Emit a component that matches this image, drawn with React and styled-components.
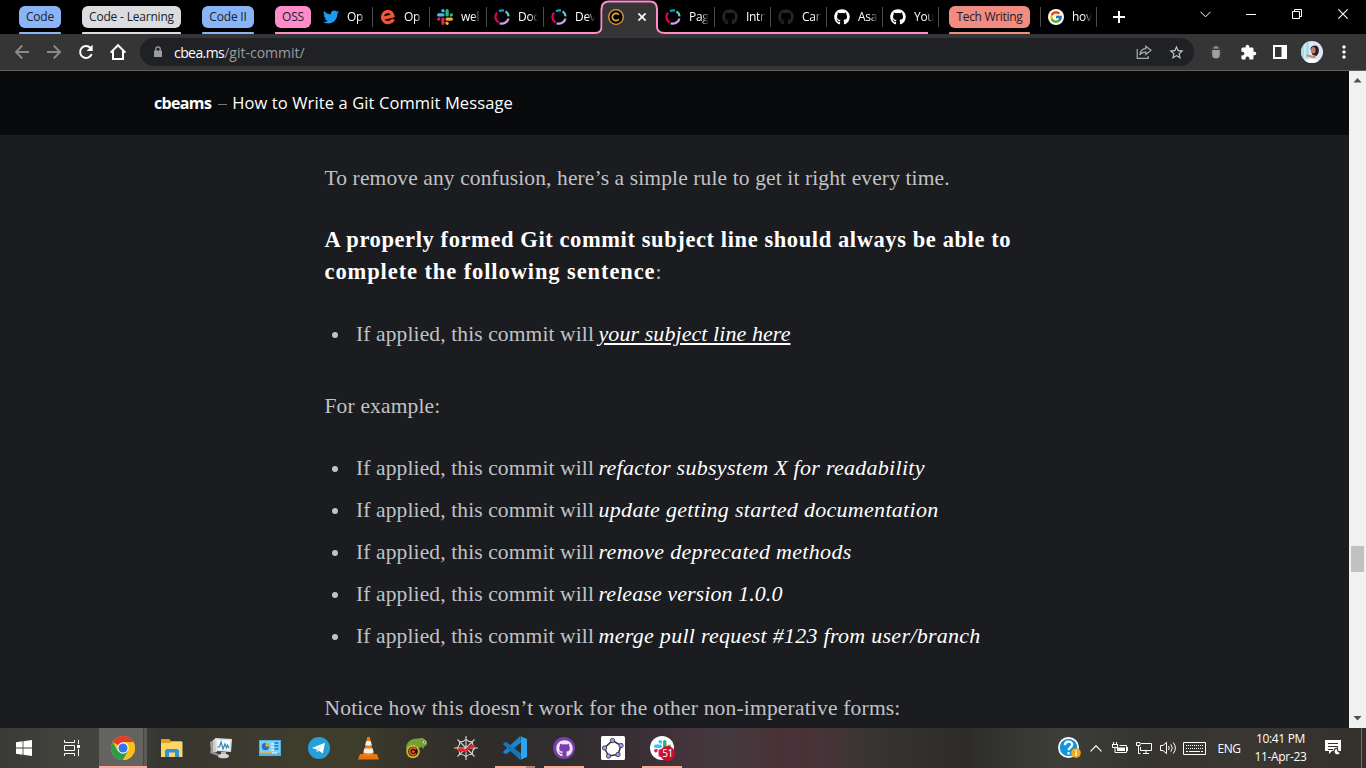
import React from "react";
import styled, { createGlobalStyle, css } from "styled-components";
import { FaTwitter, FaGithub } from "react-icons/fa";
import { FcGoogle } from "react-icons/fc";
import { MdExtension, MdStarBorder, MdMoreVert } from "react-icons/md";

const UI = `"Open Sans", "Noto Sans", sans-serif`;
const SERIF = `"Liberation Serif", serif`;
const PINK = "#ff8bcb";

const GlobalStyle = createGlobalStyle`
  * { box-sizing: border-box; }
  body { margin: 0; background: #000; overflow: hidden; font-family: ${UI}; }
  svg { display: block; flex: none; }
`;

const Screen = styled.div`
  width: 1366px;
  height: 768px;
  display: grid;
  grid-template-rows: 34px 37px 657px 40px;
  overflow: hidden;
`;

/* ---------- Tab strip ---------- */
const TabStrip = styled.header`
  display: flex;
  align-items: stretch;
  padding-left: 19px;
  background: #000;
`;

const GroupChip = styled.div`
  position: relative;
  flex: none;
  width: ${(p) => p.$width}px;
  height: 22px;
  margin: 6px ${(p) => p.$gap}px 0 0;
  border-radius: 6px;
  background: ${(p) => p.$color};
  color: #202124;
  font-size: 12px;
  line-height: 22px;
  letter-spacing: ${(p) => p.$spacing || -0.2}px;
  text-align: center;
  white-space: nowrap;
  ${(p) =>
    !p.$open &&
    css`
      &::after {
        content: "";
        position: absolute;
        left: 0;
        right: 0;
        bottom: -6px;
        height: 2px;
        border-radius: 1px 1px 0 0;
        background: ${p.$color};
      }
    `}
`;

const OpenGroup = styled.div`
  position: relative;
  display: flex;
  margin-right: 10px;
  &::after {
    content: "";
    position: absolute;
    left: 0;
    right: 11px;
    bottom: 0;
    height: 2px;
    background: ${PINK};
  }
`;

const Tab = styled.div`
  width: ${(p) => p.$width || 57}px;
  flex: none;
  display: flex;
  align-items: center;
  gap: 8px;
  padding-left: 7px;
  position: relative;
  &::after {
    content: "";
    position: absolute;
    right: 0;
    top: 7px;
    width: 1px;
    height: 20px;
    background: ${(p) => (p.$divider === false ? "transparent" : "#4b4c4f")};
  }
`;

const TabTitle = styled.span`
  width: 20px;
  white-space: nowrap;
  font-size: 12px;
  line-height: 18px;
  letter-spacing: -0.3px;
  color: #fff;
  mask-image: linear-gradient(to right, #000 60%, transparent 100%);
`;

const ActiveTab = styled.div`
  position: relative;
  z-index: 1;
  width: 57px;
  flex: none;
  display: flex;
  align-items: center;
  gap: 14px;
  padding-left: 7px;
  > svg { position: relative; }
  > svg:first-child { position: absolute; left: -6px; top: 0; }
`;

const RoundFavicon = styled.span`
  width: 16px;
  height: 16px;
  border-radius: 50%;
  background: #fff;
  display: grid;
  place-items: center;
`;

const Divider = styled.i`
  flex: none;
  width: 1px;
  height: 20px;
  margin-top: 7px;
  background: #4b4c4f;
`;

const NewTab = styled.div`
  display: flex;
  align-items: center;
  margin-left: 16px;
`;

const WindowControls = styled.div`
  margin-left: auto;
  display: grid;
  grid-template-columns: repeat(4, 46px);
  height: 28px;
  place-items: center;
`;

/* ---------- Toolbar ---------- */
const Toolbar = styled.nav`
  display: flex;
  align-items: center;
  background: #353535;
  border-bottom: 1px solid #5e5e5e;
  padding: 0 6px 0 6px;
`;

const ToolButton = styled.span`
  width: 32px;
  flex: none;
  display: grid;
  place-items: center;
  color: ${(p) => p.$color || "#fff"};
`;

const AddressBar = styled.div`
  flex: none;
  width: 1054px;
  height: 28px;
  margin: 0 6px;
  border-radius: 14px;
  background: #202124;
  display: flex;
  align-items: center;
  padding: 0 2px 0 14px;
  font-size: 14px;
`;

const Host = styled.span`
  margin-left: 12px;
  color: #fff;
  letter-spacing: -0.58px;
`;

const Path = styled.span`
  flex: 1;
  color: #9a9da1;
`;

/* ---------- Page ---------- */
const Viewport = styled.div`
  display: grid;
  grid-template-columns: 1fr 17px;
  overflow: hidden;
`;

const Page = styled.main`
  background: #1b1c20;
  overflow: hidden;
`;

const SiteHeader = styled.div`
  height: 64px;
  padding: 0 0 1px 154px;
  background: #090a0c;
  display: flex;
  align-items: center;
  font-size: 16px;
  color: #fff;
  white-space: pre;
`;

const SiteName = styled.b`
  letter-spacing: -0.65px;
`;

const Dash = styled.span`
  width: 9px;
  height: 1px;
  margin: 3px 5px 0 7px;
  background: #77787a;
`;

const ArticleTitle = styled.span`
  font-size: 16.5px;
  letter-spacing: 0.11px;
`;

const Article = styled.article`
  margin-left: 324.5px;
  padding-top: 27px;
  width: 720px;
  font-family: ${SERIF};
  font-size: 21.5px;
  line-height: 32px;
  color: #c1c2c4;
`;

const Paragraph = styled.p`
  margin: 0 0 30px;
  letter-spacing: ${(p) => p.$spacing || 0}px;
  white-space: nowrap;
`;

const Strong = styled.strong`
  font-size: 22.5px;
  line-height: 31px;
  color: #fff;
  letter-spacing: ${(p) => p.$spacing}px;
`;

const List = styled.ul`
  display: flow-root;
  list-style: none;
  margin: 0 0 30px;
  padding: 0;
`;

const Item = styled.li`
  display: flex;
  align-items: center;
  height: 32px;
  margin-bottom: 10px;
  letter-spacing: 0.12px;
  white-space: pre;
  &::before {
    content: "";
    width: 6px;
    height: 6px;
    margin: 2px 18px 0 7.5px;
    border-radius: 50%;
    background: #c1c2c4;
  }
`;

const Subject = styled.em`
  margin-left: -1px;
  font-size: 22px;
  color: #fff;
  letter-spacing: ${(p) => p.$spacing}px;
  text-decoration: ${(p) => (p.$underlined ? "underline" : "none")};
  text-decoration-thickness: 2px;
  text-underline-offset: 2px;
`;

const Scrollbar = styled.div`
  background: #f1f1f1;
  display: flex;
  flex-direction: column;
  align-items: center;
  justify-content: space-between;
  padding: 7px 0;
`;

const Thumb = styled.div`
  width: 13px;
  height: 26px;
  margin-top: 463px;
  margin-bottom: auto;
  background: #c1c1c1;
`;

/* ---------- Taskbar ---------- */
const Taskbar = styled.footer`
  display: flex;
  align-items: stretch;
  background: linear-gradient(
    to right,
    #3a3a36 0, #43433e 70px, #42423e 130px, #373631 160px, #3d3b2e 260px, #3f3e2c 350px,
    #35332a 410px, #2e2d2b 480px, #302e2e 560px, #3a2f34 640px, #43353b 690px,
    #443a3d 730px, #4a3138 780px, #463338 825px, #3b3534 860px, #33322f 900px,
    #2d2c29 965px, #363631 1010px, #3e3e39 1060px, #35342e 1150px, #3a3732 1240px, #34312d 1366px
  );
`;

const AppButton = styled.div`
  position: relative;
  flex: none;
  width: ${(p) => (p.$system ? 48 : 49)}px;
  padding-right: ${(p) => (p.$system ? 0 : 1)}px;
  display: grid;
  place-items: center;
  ${(p) =>
    p.$running &&
    css`
      &::after {
        content: "";
        position: absolute;
        left: 4px;
        right: 5px;
        bottom: 0;
        height: 2px;
        background: ${p.$stacked
          ? "linear-gradient(to right, #f9ab98 31px, #b98277 31px)"
          : "#f9ab98"};
      }
    `}
  ${(p) =>
    p.$focused &&
    css`
      background: linear-gradient(to right, #656360 44px, #484743 44px, #484743 45px, #5c5a56 45px, #5c5a56 48px, transparent 48px);
      &::after { left: 0; right: 1px; }
    `}
`;

const PinnedApps = styled.div`
  display: flex;
  margin-left: 3px;
`;

const BadgedIcon = styled.span`
  position: relative;
  width: 24px;
  height: 24px;
  border-radius: 50%;
  background: #fff;
  display: grid;
  place-items: center;
`;

const Badge = styled.span`
  position: absolute;
  left: 10px;
  top: 10px;
  width: 15px;
  height: 15px;
  border-radius: 50%;
  background: #c8102e;
  color: #fff;
  font-size: 10px;
  line-height: 14px;
  text-align: center;
  letter-spacing: -0.4px;
`;

const Tray = styled.div`
  margin-left: auto;
  display: flex;
  align-items: center;
  color: #fff;
  font-size: 12px;
`;

const TrayIcon = styled.span`
  width: ${(p) => p.$width || 24}px;
  display: grid;
  place-items: center;
`;

const Language = styled.span`
  width: 40px;
  text-align: center;
  letter-spacing: -0.4px;
`;

const Clock = styled.div`
  width: 63px;
  text-align: center;
  line-height: 18px;
  padding-bottom: 1px;
  letter-spacing: -0.35px;
`;

const Notifications = styled.span`
  width: 42px;
  display: grid;
  place-items: center;
`;

const ShowDesktop = styled.span`
  align-self: stretch;
  width: 5px;
  margin-left: 7px;
  border-left: 1px solid #6f6e6a;
`;

/* ---------- Icons ---------- */
const SLACK_ARM =
  "M5.042 15.165a2.528 2.528 0 0 1-2.52 2.523A2.528 2.528 0 0 1 0 15.165a2.527 2.527 0 0 1 2.522-2.52h2.52v2.52zM6.313 15.165a2.527 2.527 0 0 1 2.521-2.52 2.527 2.527 0 0 1 2.521 2.52v6.313A2.528 2.528 0 0 1 8.834 24a2.528 2.528 0 0 1-2.521-2.522v-6.313z";

const SlackIcon = ({ size }) => (
  <svg width={size} height={size} viewBox="0 0 24 24">
    {["#e01e5a", "#36c5f0", "#2eb67d", "#ecb22e"].map((c, i) => (
      <path key={c} d={SLACK_ARM} fill={c} transform={`rotate(${i * 90} 12 12)`} />
    ))}
  </svg>
);

const EventbriteIcon = () => (
  <svg width="16" height="16" viewBox="0 0 16 16">
    <path d="M2.500 9.300 12.900 6.900C12.300 3.800 9.900 2 7 2.700 3.800 3.400 2 6.200 2.700 9.400c.7 3 3.300 4.600 6.300 4 2-.4 3.400-1.400 4.500-3.100" fill="none" stroke="#f05537" strokeWidth="3.300" />
  </svg>
);

const RingIcon = () => (
  <svg width="16" height="16" viewBox="0 0 16 16" fill="none" strokeWidth="2.200">
    <path d="M4.600 13.600A6.700 6.700 0 0 1 3 3.600" stroke="#e5005b" />
    <path d="M5 2.200A6.600 6.600 0 0 1 10 1.600" stroke="#00a3e0" />
    <path d="M11.600 2.400A6.700 6.700 0 0 1 14.600 7.400" stroke="#5fd3bc" />
    <path d="M14.500 9.400A6.700 6.700 0 0 1 5.600 14.200" stroke="#c9a0ea" />
  </svg>
);

const ActiveShape = () => (
  <svg width="70" height="34" viewBox="0 0 70 34">
    <path d="M0 0H70V34H0z" fill="#000" />
    <path d="M0 33C4.500 33 6.500 31 6.500 27V9C6.500 4 9 1.500 14 1.500H55C60 1.500 62 4 62 9V27C62 31 64.500 33 70 33V35H0z" fill="#353535" stroke={PINK} strokeWidth="2" />
    <path d="M4 33.500C6 32.500 7.500 31 7.500 28V10H61V28C61 31 62.500 32.500 65 34H3z" fill="#353535" />
  </svg>
);

const CopyrightFavicon = () => (
  <svg width="16" height="16" viewBox="0 0 16 16" fill="none" stroke="#e8a33d">
    <circle cx="8" cy="8" r="7.300" fill="#000" strokeWidth="1.300" />
    <path d="M10.800 5.800A3.600 3.600 0 1 0 10.800 10.200" strokeWidth="1.700" />
  </svg>
);

const CloseGlyph = ({ size = 8, w = 1.7, color = "#fff" }) => (
  <svg width={size} height={size} viewBox={`0 0 ${size} ${size}`} stroke={color} strokeWidth={w}>
    <path d={`M.4 .4 ${size - 0.4} ${size - 0.4}M${size - 0.4} .4 .4 ${size - 0.4}`} />
  </svg>
);

const ArrowIcon = ({ flip }) => (
  <svg width="16" height="16" viewBox="0 0 16 16" fill="none" stroke="#8a8a8a" strokeWidth="1.800">
    <path d="M15 8H2M8.300 1.500 1.900 8l6.400 6.500" transform={flip ? "rotate(180 8 8)" : undefined} />
  </svg>
);

const ReloadIcon = () => (
  <svg width="16" height="16" viewBox="0 0 16 16" fill="none" stroke="#fff" strokeWidth="2">
    <path d="M13.700 10.200A6 6 0 1 1 12.400 3.800" />
    <path d="M14.700 .8V7H8.500z" fill="#fff" stroke="none" />
  </svg>
);

const HomeIcon = () => (
  <svg width="18" height="18" viewBox="0 0 18 18" fill="none" stroke="#fff" strokeWidth="2">
    <path d="M1.600 9.600 9 2.200l7.400 7.400M4 8v8h10V8" />
  </svg>
);

const LockIcon = () => (
  <svg width="8" height="12" viewBox="0 0 8 12">
    <path d="M0 4.500h8V11H0z" fill="#9a9da1" />
    <path d="M1.800 5V3a2.200 2.200 0 0 1 4.400 0v2" fill="none" stroke="#9a9da1" strokeWidth="1.300" />
  </svg>
);

const ShareIcon = () => (
  <svg width="16" height="16" viewBox="0 0 16 16" fill="none" stroke="#a9abae" strokeWidth="1.200">
    <path d="M1.200 5v9.400h11V12" />
    <path d="M9.800 2.200 15 6.300l-5.200 4.200V8.200c-3 0-4.800.8-6 2.800.3-3.500 2.300-6 6-6.300z" />
  </svg>
);

const BugIcon = () => (
  <svg width="14" height="16" viewBox="0 0 14 16">
    <path d="M1 4 4 6M13 4l-3 2M0 9h14M1 14l3-2M13 14l-3-2" stroke="#454545" />
    <path d="M4.200 4.800a2.800 2.800 0 0 1 5.600 0z" fill="#8b8b8b" />
    <path d="M3.200 6h7.600v4.500a3.800 4 0 0 1-7.600 0z" fill="#a0a0a0" />
  </svg>
);

const SidePanelIcon = () => (
  <svg width="14" height="14" viewBox="0 0 14 14">
    <path d="M1 1h12v12H1z" fill="none" stroke="#fff" strokeWidth="2" />
    <path d="M8.500 1H13v12H8.500z" fill="#fff" />
  </svg>
);

const Avatar = () => (
  <svg width="22" height="22" viewBox="0 0 22 22">
    <defs><clipPath id="avatar"><circle cx="11" cy="11" r="11" /></clipPath></defs>
    <g clipPath="url(#avatar)">
      <path d="M0 0h22v22H0z" fill="#dfe7f5" />
      <path d="M0 0h8v22H0z" fill="#a9dbe9" />
      <path d="M3 0h2v22H3z" fill="#c8ebf3" />
      <path d="M9.500 8c0-4 7-5 8-1 1 3 0 6-2 8l-4-1z" fill="#2e2028" />
      <ellipse cx="12.300" cy="9.200" rx="2.200" ry="3.200" fill="#b98068" />
      <path d="M5 13l6 1.500 4 .5-1 3-8-2.500z" fill="#c99079" />
      <path d="M3 22c0-4 4-5 7-4.500 5-.5 8 1 8 4.500z" fill="#fff" />
    </g>
  </svg>
);

const Triangle = ({ down }) => (
  <svg width="9" height="5" viewBox="0 0 9 5">
    <path d={down ? "M.5 0h8l-4 4.500z" : "M.5 4.500h8l-4-4.500z"} fill="#505050" />
  </svg>
);

const WindowsIcon = () => (
  <svg width="16" height="16" viewBox="0 0 16 16" fill="#fff">
    <path d="M0 2.200 6.600 1.300V7.600H0zM7.400 1.200 16 0V7.600H7.400zM0 8.400H6.600V14.700L0 13.800zM7.400 8.400H16V16L7.400 14.800z" />
  </svg>
);

const TaskViewIcon = () => (
  <svg width="17" height="16" viewBox="0 0 17 16" fill="none" stroke="#fff">
    <path d="M.5 0v2.500h10V0M.5 5.500h10v5H.5zM.5 16v-2.500h10V16M14.500 0v4M14.500 9v7" />
    <path d="M13 5h3v3h-3z" fill="#fff" stroke="none" />
  </svg>
);

const ChromeIcon = () => (
  <svg width="24" height="24" viewBox="0 0 24 24">
    <circle cx="12" cy="12" r="12" fill="#fbc116" />
    <path d="M12 12 1.600 6A12 12 0 0 1 22.400 6z" fill="#e33b2e" />
    <path d="M1.600 6A12 12 0 0 0 12 24l5.200-9L12 12 6.800 15z" fill="#2c9c4b" />
    <path d="M12 6h10.400A12 12 0 0 1 12 24l5.200-9z" fill="#fbc116" />
    <circle cx="12" cy="12" r="5.700" fill="#fff" />
    <circle cx="12" cy="12" r="4.600" fill="#3177e8" />
  </svg>
);

const FolderIcon = () => (
  <svg width="22" height="19" viewBox="0 0 22 19">
    <path d="M0 0h8l2 2h11v4H0z" fill="#e0a31f" />
    <path d="M0 4h9l2-1h10.500v15H0z" fill="#fcd667" />
    <path d="M4 18v-6.500l1.500-1.500h11l1.500 1.500V18h-4v-4.500H8V18z" fill="#3192d8" />
  </svg>
);

const MonitorIcon = () => (
  <svg width="24" height="22" viewBox="0 0 24 22">
    <path d="M1 5l5-3v12l-4 2z" fill="#9a9c9c" />
    <path d="M4 3 8 1v14l-4 1z" fill="#c9cccc" />
    <path d="M6 1 23 2 22 15 7 14z" fill="#dfe3e3" />
    <path d="M8 3l13 .6-.8 10L9 13z" fill="#f7fbfd" />
    <path d="M8.500 10h2l1.500-5 2 7 2-5 1.500 4 1-3 1.500 3" fill="none" stroke="#3486b8" strokeWidth="1.200" />
    <path d="M12 15h5v3h-5z" fill="#b4b6b6" />
    <ellipse cx="14.500" cy="19" rx="5.500" ry="2.300" fill="#d5d7d7" />
    <path d="M1 14l9 3-1 2-8-3z" fill="#8f9191" />
  </svg>
);

const PanelIcon = () => (
  <svg width="22" height="16" viewBox="0 0 22 16">
    <path d="M0 0h22v16H0z" fill="#4fb3e4" />
    <path d="M1 1h20v12H1z" fill="#7fd0f5" />
    <circle cx="6.500" cy="6.500" r="3.700" fill="#1d75bd" />
    <path d="M6.500 6.500V2.800a3.700 3.700 0 0 1 3.700 3.700z" fill="#f4a62a" />
    <path d="M12 4h3M12 7h3M12 10h3" stroke="#fff" />
    <path d="M15.500 3h4M15.500 6h4M15.500 9h4" stroke="#1d75bd" strokeWidth="1.500" />
    <path d="M3 13h9" stroke="#f4a62a" strokeWidth="1.500" /><path d="M13 13h5" stroke="#fff" />
  </svg>
);

const TelegramIcon = () => (
  <svg width="22" height="22" viewBox="0 0 22 22">
    <circle cx="11" cy="11" r="11" fill="#279fda" />
    <path d="M4 11 17 5.800 14.800 16.500 10.800 13.600 9 15.300 8.600 12.500z" fill="#fff" />
    <path d="M8.600 12.500 14.500 8 10.300 12.700 9 15.300z" fill="#b9d9ec" />
  </svg>
);

const ConeIcon = () => (
  <svg width="21" height="23" viewBox="0 0 21 23">
    <path d="M2 17h17l2 5.500H0z" fill="#e8720c" />
    <path d="M9.300 0h2.400L16 18.500q-5.500 2.500-11 0z" fill="#f07f12" />
    <path d="M8.300 4h4.400l1.100 4q-3.300 1.300-6.600 0zM6.300 11.500h8.400l1 4q-5.200 1.900-10.400 0z" fill="#eee" />
  </svg>
);

const ChameleonIcon = () => (
  <svg width="24" height="22" viewBox="0 0 24 22">
    <path d="M1 12C1 5 6 1.500 12 1.500c3 0 4-.8 6-.5l4 3.500c.5 2.500-.5 4-2.500 5l-3 .5-1.500 1-2-1.500C9 7 5 8 3 13z" fill="#789f37" />
    <circle cx="8" cy="14.500" r="6.800" fill="#c9b42a" />
    <circle cx="8" cy="14.500" r="4.800" fill="#16110a" />
    <path d="M11 16.500a3.500 3.500 0 1 1 .2-4" fill="none" stroke="#d9582d" strokeWidth="1.800" />
    <circle cx="8.300" cy="14.600" r="1.500" fill="#d9582d" />
    <path d="M13 9.500v3M18 9.500v2" stroke="#a5bb62" strokeWidth="1.200" />
    <circle cx="19.500" cy="5" r="1.500" fill="#e9edd9" /><circle cx="19.700" cy="5" r=".7" fill="#222" />
  </svg>
);

const WebIcon = () => (
  <svg width="24" height="24" viewBox="0 0 24 24" fill="none" stroke="#d3d3d3" strokeWidth="1.100">
    <path d="M12 0v24M3.500 3.500l17 17M20.500 3.500l-17 17M0 12h24" />
    <path d="M12 3.300Q9.500 6 5.800 5.800 6 9.500 3.300 12 6 14.500 5.800 18.200 9.500 18 12 20.700 14.500 18 18.200 18.200 18 14.500 20.700 12 18 9.500 18.200 5.800 14.500 6 12 3.300z" />
    <path d="M4.500 14 8 13.800l3.500 1.200 5-5 3.500.3" stroke="#ee2020" strokeWidth="2.800" strokeLinecap="round" />
  </svg>
);

const VSCodeIcon = () => (
  <svg width="24" height="24" viewBox="0 0 24 24">
    <path d="M17.200 0 18 6.500 3 18.200.6 16.800q-.9-.8 0-1.500z" fill="#1b86d0" />
    <path d="M.6 7.200 3 5.800 18 17.500 17.200 24 .6 8.700q-.9-.7 0-1.500z" fill="#1277bd" />
    <path d="M17 0l7 3v18l-7 3q1-.5 1-2V2q0-1.500-1-2z" fill="#2ba5f0" />
  </svg>
);

const GitHubDisc = styled.span`
  width: 22px;
  height: 22px;
  border-radius: 50%;
  background: #7a3fae;
  display: grid;
  place-items: center;
  color: #efe4f7;
`;

const PentagonIcon = () => (
  <svg width="24" height="24" viewBox="0 0 24 24">
    <rect width="24" height="24" rx="1.500" fill="#fff" />
    <path d="M11.500 4.500 20 9.500 17 18.500 7.500 20 3.500 12z" fill="none" stroke="#333" strokeWidth="1.500" />
    {[[11.5, 4.5], [20, 9.5], [17, 18.5], [7.5, 20], [3.5, 12]].map(([x, y]) => (
      <circle key={x} cx={x} cy={y} r="2.200" fill="#9a9af5" stroke="#333" strokeWidth=".8" />
    ))}
  </svg>
);

const HelpIcon = () => (
  <svg width="23" height="22" viewBox="0 0 23 22" fill="none">
    <circle cx="10.500" cy="10.500" r="10.500" fill="#fff" />
    <circle cx="10.500" cy="10.500" r="8.800" fill="#1296db" />
    <path d="M6.900 8.200C6.900 3.400 14.200 3.600 14.200 7.600c0 2.800-3.600 2.700-3.600 5.600M10.600 15v2.400" stroke="#fff" strokeWidth="2.300" />
    <circle cx="18" cy="16" r="4.800" fill="#f5a81c" />
    <path d="M18 13v1.400M18 15.300v3.600" stroke="#fff" strokeWidth="1.400" />
  </svg>
);

const BatteryIcon = () => (
  <svg width="16" height="12" viewBox="0 0 16 12" fill="none" stroke="#fff">
    <path d="M1.500 0v2M4.500 0v2M0 2.500h6M.5 3v2.500h5V3M3 6v4.500h11.500v-7H7.500" />
    <path d="M5 5.500h8v3.500H5z" fill="#fff" stroke="none" /><path d="M15.500 5v4" />
  </svg>
);

const NetworkIcon = () => (
  <svg width="16" height="14" viewBox="0 0 16 14" fill="none" stroke="#fff">
    <path d="M5 2.500h10.500v7H4.500V6M7 12.500h6M10 10v2.500M.5 1.500h3.500v3H.5zM2.500 5v7.500h2" />
  </svg>
);

const VolumeIcon = () => (
  <svg width="17" height="14" viewBox="0 0 17 14" fill="none" stroke="#fff">
    <path d="M.5 4.500H3L6.500 1.300V12.700L3 9.500H.5zM8.500 5q1.500 2 0 4M10.800 3.300q3 3.700 0 7.400M13.200 1.500q4.400 5.500 0 11" />
  </svg>
);

const KeyboardIcon = () => (
  <svg width="23" height="13" viewBox="0 0 23 13" fill="none" stroke="#fff">
    <path d="M.5 .5h22v12H.5z" />
    <path d="M3 3.500h17M3 6.500h17" strokeDasharray="1 1" /><path d="M3 9.500h2M6 9.500h11M18 9.500h2" />
  </svg>
);

const NoticeIcon = () => (
  <svg width="17" height="16" viewBox="0 0 17 16">
    <path d="M0 0h16v11H7l-3 3v-3H0z" fill="#fff" />
    <path d="M3 3.500h10M3 6.500h10M3 9.500h5" stroke="#35322e" />
    <path d="M12.500 8a3.500 3.500 0 1 0 3.300 4.500A3.500 3.500 0 0 1 12.500 8z" fill="#fff" stroke="#35322e" strokeWidth="1.200" />
  </svg>
);

const examples = [
  ["refactor subsystem X for readability", 0.28],
  ["update getting started documentation", 0.295],
  ["remove deprecated methods", 0.315],
  ["release version 1.0.0", 0.07],
  ["merge pull request #123 from user/branch", 0.28],
];

export default function App() {
  return (
    <Screen>
      <GlobalStyle />
      <TabStrip>
        <GroupChip $width={42} $gap={21} $color="#8ab4f8">Code</GroupChip>
        <GroupChip $width={99} $gap={21} $color="#dadce0">Code - Learning</GroupChip>
        <GroupChip $width={52} $gap={21} $color="#8ab4f8">Code II</GroupChip>
        <OpenGroup>
          <GroupChip $open $width={36} $gap={5} $color={PINK}>OSS</GroupChip>
          <Tab><FaTwitter size={16} color="#1d9bf0" /><TabTitle>Op</TabTitle></Tab>
          <Tab><EventbriteIcon /><TabTitle>Op</TabTitle></Tab>
          <Tab><SlackIcon size={16} /><TabTitle>wel</TabTitle></Tab>
          <Tab><RingIcon /><TabTitle>Doc</TabTitle></Tab>
          <Tab $divider={false}><RingIcon /><TabTitle>Dev</TabTitle></Tab>
          <ActiveTab>
            <ActiveShape />
            <CopyrightFavicon />
            <CloseGlyph />
          </ActiveTab>
          <Tab><RingIcon /><TabTitle>Pag</TabTitle></Tab>
          <Tab $width={56}><FaGithub size={16} color="#222427" /><TabTitle>Intr</TabTitle></Tab>
          <Tab $width={56}><FaGithub size={16} color="#222427" /><TabTitle>Car</TabTitle></Tab>
          <Tab $width={56}><FaGithub size={16} color="#fff" /><TabTitle>Asa</TabTitle></Tab>
          <Tab $width={56}><FaGithub size={16} color="#fff" /><TabTitle>You</TabTitle></Tab>
        </OpenGroup>
        <GroupChip $width={81} $gap={10} $spacing={-0.3} $color="#f28b82">Tech Writing</GroupChip>
        <Divider />
        <Tab $width={56}>
          <RoundFavicon><FcGoogle size={14} /></RoundFavicon>
          <TabTitle>hov</TabTitle>
        </Tab>
        <NewTab>
          <svg width="12" height="12" viewBox="0 0 12 12" stroke="#fff" strokeWidth="2"><path d="M6 0v12M0 6h12" /></svg>
        </NewTab>
        <WindowControls>
          <svg width="11" height="7" viewBox="0 0 11 7" fill="none" stroke="#fff"><path d="M.5 .8 5.500 5.800l5-5" /></svg>
          <svg width="10" height="1" viewBox="0 0 10 1"><path d="M0 0h10v1H0z" fill="#fff" /></svg>
          <svg width="10" height="10" viewBox="0 0 10 10" fill="none" stroke="#fff"><path d="M.5 2.500h7v7h-7zM2.500 2.500v-2h7v7h-2" /></svg>
          <CloseGlyph size={10} w={1.1} />
        </WindowControls>
      </TabStrip>

      <Toolbar>
        <ToolButton><ArrowIcon /></ToolButton>
        <ToolButton><ArrowIcon flip /></ToolButton>
        <ToolButton><ReloadIcon /></ToolButton>
        <ToolButton><HomeIcon /></ToolButton>
        <AddressBar>
          <LockIcon />
          <Host>cbea.ms</Host>
          <Path>/git-commit/</Path>
          <ToolButton><ShareIcon /></ToolButton>
          <ToolButton $color="#c4c6c9"><MdStarBorder size={17} /></ToolButton>
        </AddressBar>
        <ToolButton><BugIcon /></ToolButton>
        <ToolButton><MdExtension size={17} /></ToolButton>
        <ToolButton><SidePanelIcon /></ToolButton>
        <ToolButton><Avatar /></ToolButton>
        <ToolButton><MdMoreVert size={20} /></ToolButton>
      </Toolbar>

      <Viewport>
        <Page>
          <SiteHeader>
            <SiteName>cbeams</SiteName>
            <Dash />
            <ArticleTitle>How to Write a Git Commit Message</ArticleTitle>
          </SiteHeader>
          <Article>
            <Paragraph $spacing={0.12}>To remove any confusion, here’s a simple rule to get it right every time.</Paragraph>
            <Paragraph>
              <Strong $spacing={0.59}>A properly formed Git commit subject line should always be able to</Strong>
              <br />
              <Strong $spacing={0.9}>complete the following sentence</Strong>:
            </Paragraph>
            <List>
              <Item>
                {"If applied, this commit will "}
                <Subject $underlined $spacing={0.07}>your subject line here</Subject>
              </Item>
            </List>
            <Paragraph $spacing={0.16}>For example:</Paragraph>
            <List>
              {examples.map(([text, spacing]) => (
                <Item key={text}>
                  {"If applied, this commit will "}
                  <Subject $spacing={spacing}>{text}</Subject>
                </Item>
              ))}
            </List>
            <Paragraph $spacing={0.19}>Notice how this doesn’t work for the other non-imperative forms:</Paragraph>
          </Article>
        </Page>
        <Scrollbar>
          <Triangle />
          <Thumb />
          <Triangle down />
        </Scrollbar>
      </Viewport>

      <Taskbar>
        <AppButton $system><WindowsIcon /></AppButton>
        <AppButton $system><TaskViewIcon /></AppButton>
        <PinnedApps>
          <AppButton $running $focused><ChromeIcon /></AppButton>
          <AppButton><FolderIcon /></AppButton>
          <AppButton><MonitorIcon /></AppButton>
          <AppButton><PanelIcon /></AppButton>
          <AppButton><TelegramIcon /></AppButton>
          <AppButton><ConeIcon /></AppButton>
          <AppButton><ChameleonIcon /></AppButton>
          <AppButton><WebIcon /></AppButton>
          <AppButton $running $stacked><VSCodeIcon /></AppButton>
          <AppButton $running><GitHubDisc><FaGithub size={17} /></GitHubDisc></AppButton>
          <AppButton><PentagonIcon /></AppButton>
          <AppButton $running>
            <BadgedIcon><SlackIcon size={17} /><Badge>51</Badge></BadgedIcon>
          </AppButton>
        </PinnedApps>
        <Tray>
          <TrayIcon $width={30}><HelpIcon /></TrayIcon>
          <TrayIcon>
            <svg width="12" height="7" viewBox="0 0 12 7" fill="none" stroke="#fff" strokeWidth="1.200"><path d="M.5 6.300 6 .8l5.500 5.500" /></svg>
          </TrayIcon>
          <TrayIcon><BatteryIcon /></TrayIcon>
          <TrayIcon><NetworkIcon /></TrayIcon>
          <TrayIcon><VolumeIcon /></TrayIcon>
          <TrayIcon $width={29}><KeyboardIcon /></TrayIcon>
          <Language>ENG</Language>
          <Clock>
            <div>10:41 PM</div>
            <div>11-Apr-23</div>
          </Clock>
          <Notifications><NoticeIcon /></Notifications>
          <ShowDesktop />
        </Tray>
      </Taskbar>
    </Screen>
  );
}
